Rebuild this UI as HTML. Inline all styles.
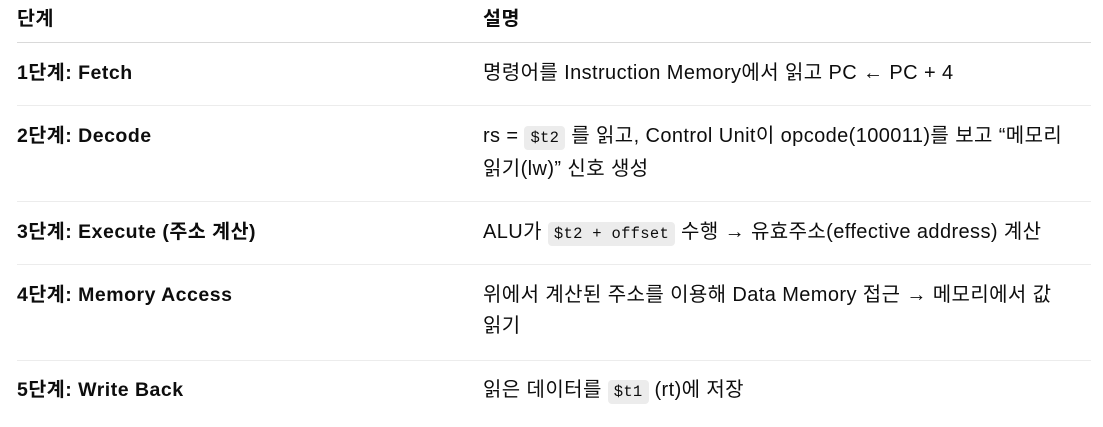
<!DOCTYPE html>
<html><head><meta charset="utf-8"><style>
body{margin:0;width:1103px;height:427px;background:#fff;position:relative;overflow:hidden;font-family:"Liberation Sans","Noto Sans CJK KR",sans-serif;font-size:20px;letter-spacing:0.4px;color:#0d0d0d}
.t{position:absolute;white-space:nowrap;line-height:31px}
.b{font-weight:bold;font-size:19.5px;letter-spacing:0.5px}
.l{position:absolute;left:17px;width:1074px;height:1px;background:#ececec}
code{font-family:"Liberation Mono","DejaVu Sans Mono",monospace;font-size:15.5px;letter-spacing:0.3px;background:#ececec;border-radius:4px;padding:3px 6px}
</style></head><body>
<div class="t b" style="left:17px;top:4px">단계</div>
<div class="t b" style="left:483px;top:4px">설명</div>
<div class="l" style="top:42px;background:#d9d9d9"></div>

<div class="t b" style="left:17px;top:58px">1단계: Fetch</div>
<div class="t" style="left:483px;top:58px">명령어를 Instruction Memory에서 읽고 PC ← PC + 4</div>
<div class="l" style="top:105px"></div>

<div class="t b" style="left:17px;top:121px">2단계: Decode</div>
<div class="t" style="left:483px;top:121px">rs = <code>$t2</code> 를 읽고, Control Unit이 opcode(100011)를 보고 “메모리<br>읽기(lw)” 신호 생성</div>
<div class="l" style="top:201px"></div>

<div class="t b" style="left:17px;top:217px">3단계: Execute (주소 계산)</div>
<div class="t" style="left:483px;top:217px">ALU가 <code>$t2 + offset</code> 수행 → 유효주소(effective address) 계산</div>
<div class="l" style="top:264px"></div>

<div class="t b" style="left:17px;top:280px">4단계: Memory Access</div>
<div class="t" style="left:483px;top:280px">위에서 계산된 주소를 이용해 Data Memory 접근 → 메모리에서 값<br>읽기</div>
<div class="l" style="top:360px"></div>

<div class="t b" style="left:17px;top:375px">5단계: Write Back</div>
<div class="t" style="left:483px;top:375px">읽은 데이터를 <code>$t1</code> (rt)에 저장</div>
</body></html>
